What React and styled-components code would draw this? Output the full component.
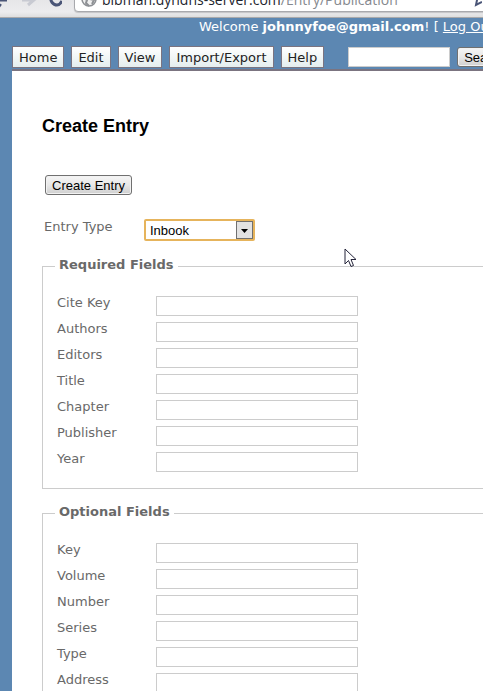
import React from 'react';
import styled, { createGlobalStyle } from 'styled-components';

const Global = createGlobalStyle`
  *, *::before, *::after { box-sizing: border-box; }
  html, body { margin: 0; height: 100%; overflow: hidden; }
  body { background: #5c87b2; color: #696969; font: 13px/18px "DejaVu Sans", Verdana, sans-serif; }
  input, button, select { font: 13px "Liberation Sans", Arial, sans-serif; color: #000; }
`;

const BrowserBar = styled.div`
  display: flex;
  align-items: flex-end;
  gap: 12px;
  height: 18px;
  padding-bottom: 5px;
  overflow: hidden;
  background: linear-gradient(#e6e6e8, #ececee 12px, #dedede);
  border-bottom: 1px solid #a9a9ab;
`;

const BrowserIcons = styled.svg`
  flex: none;
  width: 62px;
  height: 12px;
`;

const AddressBar = styled.div`
  flex: 1;
  display: flex;
  align-items: flex-end;
  gap: 5px;
  height: 26px;
  margin-right: -8px;
  padding: 0 8px 0 6px;
  background: #fff;
  border: 1px solid #a8a9ad;
  border-radius: 4px;
  box-shadow: 0 1px 1px #c4c4c6;
  white-space: nowrap;
  overflow: hidden;
`;

const Globe = styled.svg`
  flex: none;
  width: 16px;
  height: 16px;
  margin-bottom: 4px;
`;

const Url = styled.span`
  flex: 1;
  color: #85888e;
  font: 14px/20px "Open Sans", "Noto Sans", sans-serif;
  padding-bottom: 1px;
  b { font-weight: 400; color: #22242c; }
`;

const Star = styled.svg`
  flex: none;
  width: 8px;
  height: 12px;
  margin-bottom: 4px;
`;

const Page = styled.div`
  padding-left: 12px;
`;

const Welcome = styled.div`
  padding: 0 0 0 187px;
  height: 28px;
  color: #fff;
  white-space: nowrap;
  overflow: hidden;
  a { color: #fff; }
`;

const Toolbar = styled.header`
  display: flex;
  height: 25px;
  white-space: nowrap;
  overflow: hidden;
  border-bottom: 2px solid #7b7480;
`;

const Menu = styled.nav`
  display: flex;
  gap: 7px;
  margin-right: 24px;
`;

const MenuLink = styled.a`
  height: 22px;
  padding: 0 6px;
  line-height: 21px;
  color: #222;
  text-decoration: none;
  background: linear-gradient(#fff, #e4eeee);
  border: 1px solid #7b7480;
`;

const Search = styled.form`
  display: flex;
  gap: 7px;
  padding-top: 1px;
`;

const SearchBox = styled.input`
  width: 102px;
  height: 20px;
  border: 1px solid #ccc;
  background: #fff;
`;

const Button = styled.button`
  height: 20px;
  padding: 0 6px;
  border: 1px solid #707070;
  border-radius: 3px;
  background: linear-gradient(#f5f5f5, #e8e8e8 50%, #cfcfcf);
  box-shadow: inset 0 0 0 1px #f2f2f2;
  white-space: nowrap;
`;

const Main = styled.main`
  padding: 43px 0 30px 30px;
  background: #fff;
`;

const Title = styled.h1`
  margin: 0 0 37px;
  color: #000;
  font: bold 18px/24px "Liberation Sans", Arial, sans-serif;
`;

const Actions = styled.div`
  display: flex;
  padding-left: 3px;
  margin-bottom: 24px;
`;

const TypeRow = styled.div`
  display: flex;
  margin-bottom: 16px;
  padding-left: 2px;
  label { width: 100px; line-height: 16px; }
`;

const SelectFrame = styled.div`
  position: relative;
  width: 111px;
  height: 22px;
  border: 2px solid #e6b45c;
  border-radius: 2px;
  background: #fff;
  svg { position: absolute; right: 0; top: 0; pointer-events: none; }
`;

const Select = styled.select`
  appearance: none;
  width: 100%;
  height: 18px;
  padding: 0 20px 0 4px;
  border: 0;
  outline: 0;
  background: transparent;
`;

const Group = styled.fieldset`
  min-width: 0;
  margin: 0 0 15px;
  padding: 18px 14px 13px;
  border: 1px solid #ccc;
  border-right: 0;
`;

const Legend = styled.legend`
  margin-left: -2px;
  padding: 0 4px;
  height: 18px;
  line-height: 16px;
  font-weight: bold;
`;

const Field = styled.div`
  display: flex;
  height: 26px;
  label { width: 99px; line-height: 20px; }
`;

const TextBox = styled.input`
  width: 202px;
  height: 20px;
  margin: 3px 0;
  padding: 0 3px;
  border: 1px solid #ccc;
`;

const Cursor = styled.svg`
  position: absolute;
  left: 344px;
  top: 248px;
  width: 13px;
  height: 20px;
  pointer-events: none;
`;

const menu = ['Home', 'Edit', 'View', 'Import/Export', 'Help'];
const groups = [
  { title: 'Required Fields', fields: ['Cite Key', 'Authors', 'Editors', 'Title', 'Chapter', 'Publisher', 'Year'] },
  { title: 'Optional Fields', fields: ['Key', 'Volume', 'Number', 'Series', 'Type', 'Address'] },
];

function FieldGroup({ title, fields }) {
  return (
    <Group>
      <Legend>{title}</Legend>
      {fields.map((name) => {
        const id = name.toLowerCase().replace(' ', '-');
        return (
          <Field key={id}>
            <label htmlFor={id}>{name}</label>
            <TextBox id={id} name={id} type="text" />
          </Field>
        );
      })}
    </Group>
  );
}

export default function App() {
  return (
    <>
      <Global />
      <BrowserBar>
        <BrowserIcons viewBox="0 0 62 12" fill="none" strokeWidth="3" aria-hidden="true">
          <path d="M-5 0H7M-2 -6L-7 0L1 6" stroke="#4a5577" />
          <path d="M22 0H34M28 -6L34 0L28 5" stroke="#c8cad2" />
          <path d="M51 -3C50 1 53 5 57 5C60 5 61 3 62 1" stroke="#4a5577" />
        </BrowserIcons>
        <AddressBar>
          <Globe viewBox="0 0 16 16" fill="none" stroke="#8d9094" aria-hidden="true">
            <circle cx="8" cy="8" r="7" fill="#f0f0f0" strokeWidth="1.5" />
            <path d="M2 7L6 9L5 12L8 15M9 8L13 9L11 13M9 2L7 6" strokeWidth="2" />
          </Globe>
          <Url><b>bibman.dyndns-server.com</b>/Entry/Publication</Url>
          <Star viewBox="0 0 8 12" aria-hidden="true">
            <path d="M1 2L3 5L2 10L8 7" fill="none" stroke="#4a5577" strokeWidth="2" />
          </Star>
        </AddressBar>
      </BrowserBar>
      <Page>
        <Welcome>Welcome <b>johnnyfoe@gmail.com</b>! [ <a href="#logout">Log Out</a> ]</Welcome>
        <Toolbar>
          <Menu>{menu.map((item) => <MenuLink key={item} href="#menu">{item}</MenuLink>)}</Menu>
          <Search>
            <SearchBox type="text" aria-label="Search entries" />
            <Button type="button">Search</Button>
          </Search>
        </Toolbar>
        <Main>
          <Title>Create Entry</Title>
          <Actions><Button type="button">Create Entry</Button></Actions>
          <TypeRow>
            <label htmlFor="entry-type">Entry Type</label>
            <SelectFrame>
              <Select id="entry-type" defaultValue="Inbook">
                <option>Inbook</option>
              </Select>
              <svg width="17" height="18" viewBox="0 0 17 18" aria-hidden="true">
                <rect x="0.5" y="0.5" width="16" height="17" fill="#e2e2e2" stroke="#707070" />
                <path d="M5 8H12L8.500 12Z" fill="#000" />
              </svg>
            </SelectFrame>
          </TypeRow>
          {groups.map((group) => <FieldGroup key={group.title} {...group} />)}
        </Main>
      </Page>
      <Cursor viewBox="0 0 13 20" aria-hidden="true">
        <path d="M1 1V16L4.500 12.500L7 18.500L9.500 17.500L7 11.500H12Z" fill="#fff" stroke="#24243a" />
      </Cursor>
    </>
  );
}
